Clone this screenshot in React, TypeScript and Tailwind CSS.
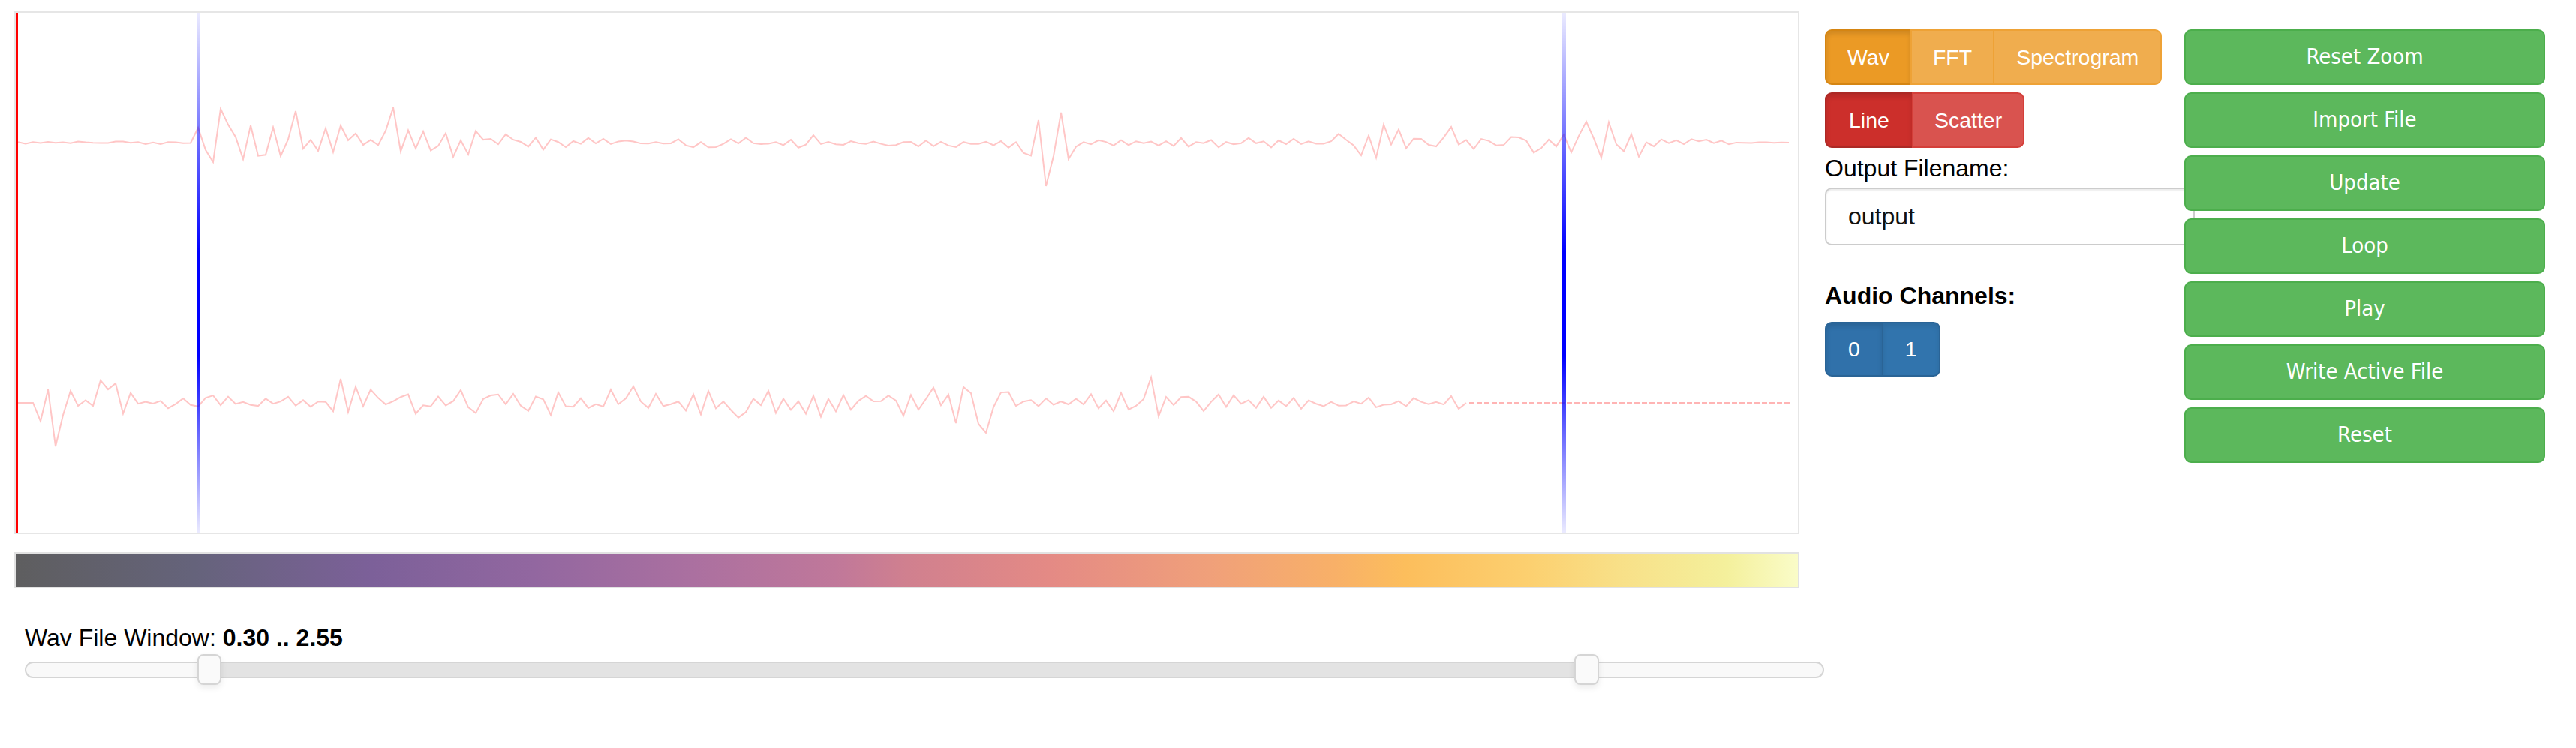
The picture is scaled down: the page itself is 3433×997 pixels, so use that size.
import React from "react";

function rng(seed: number) {
  let a = seed;
  return () => {
    a |= 0;
    a = (a + 0x6d2b79f5) | 0;
    let t = Math.imul(a ^ (a >>> 15), 1 | a);
    t = (t + Math.imul(t ^ (t >>> 7), 61 | t)) ^ t;
    return ((t ^ (t >>> 14)) >>> 0) / 4294967296;
  };
}

function makePoints(
  cy: number,
  env: (x: number) => number,
  seed: number,
  x0: number,
  x1: number,
  step: number,
  spikes: [number, number][]
) {
  const r = rng(seed);
  const vals: number[] = [];
  const xs: number[] = [];
  let sign = 1;
  for (let x = x0; x <= x1; x += step) {
    const a = env(x);
    if (r() < 0.72) sign = -sign;
    const q = r();
    let v = a * (0.1 + 0.9 * q * q) * sign;
    if (r() < 0.12) v *= 1.7;
    xs.push(x);
    vals.push(v);
  }
  for (const [sx, sv] of spikes) {
    const i = Math.round((sx - x0) / step);
    if (i >= 0 && i < vals.length) vals[i] = sv;
  }
  return xs.map((x, i) => `${x.toFixed(1)},${(cy + vals[i]).toFixed(1)}`).join(" ");
}

const env0 = (x: number) => {
  if (x < 243) return 2;
  if (x < 660) return 44 - (x - 243) * 0.06;
  if (x < 1340) return 7;
  if (x < 1420) return 30;
  if (x < 1760) return 7;
  if (x < 2170) return 22;
  if (x < 2290) return 5;
  return 0.6;
};

const env1 = (x: number) => {
  if (x < 30) return 0.5;
  if (x < 60) return 30;
  if (x < 160) return 22;
  if (x < 243) return 9;
  if (x < 290) return 30;
  if (x < 420) return 10;
  if (x < 480) return 28;
  if (x < 1220) return 18;
  if (x < 1300) return 30;
  if (x < 1480) return 16;
  if (x < 1560) return 28;
  if (x < 1930) return 11;
  return 0.4;
};

const spikes0: [number, number][] = [
  [263, 26],
  [273, -45],
  [303, 22],
  [373, -42],
  [1363, -30],
  [1373, 58],
  [1383, 18],
  [1393, -40],
  [1403, 22],
  [1813, 20],
  [1823, -24],
  [2093, -28],
  [2113, 20],
];

const spikes1: [number, number][] = [
  [53, 58],
  [73, -16],
  [113, -30],
  [123, -18],
  [433, -32],
  [443, 12],
  [823, -22],
  [1283, 28],
  [1293, 40],
  [1513, -34],
  [1523, 18],
];

function Wave() {
  const W = 2375;
  const H = 693;
  const top = makePoints(173, env0, 11, 3, 2366, 10, spikes0);
  const bottom = makePoints(520, env1, 29, 3, 1937, 10, spikes1);
  return (
    <svg width={W} height={H} viewBox={`0 0 ${W} ${H}`} className="block">
      <defs>
        <linearGradient id="blueFade" x1="0" y1="0" x2="0" y2="1">
          <stop offset="0%" stopColor="#0000ff" stopOpacity="0.08" />
          <stop offset="46%" stopColor="#0000ff" stopOpacity="1" />
          <stop offset="66%" stopColor="#0000ff" stopOpacity="1" />
          <stop offset="100%" stopColor="#0000ff" stopOpacity="0.08" />
        </linearGradient>
      </defs>
      <polyline
        points={top}
        fill="none"
        stroke="#ffc6c6"
        strokeWidth="2"
        strokeLinejoin="miter"
      />
      <polyline
        points={bottom}
        fill="none"
        stroke="#ffc6c6"
        strokeWidth="2"
        strokeLinejoin="miter"
      />
      <line
        x1="1937"
        y1="520"
        x2="2366"
        y2="520"
        stroke="#ffb4b4"
        strokeWidth="2"
        strokeDasharray="7 3"
      />
      <rect x="0" y="0" width="3" height={H} fill="#ff0000" />
      <rect x="241" y="0" width="5" height={H} fill="url(#blueFade)" />
      <rect x="2061" y="0" width="5" height={H} fill="url(#blueFade)" />
    </svg>
  );
}

const greenFont =
  "font-['DejaVu_Sans_Condensed','DejaVu_Sans',sans-serif] font-stretch-condensed";

function GreenButton({ label }: { label: string }) {
  return (
    <button
      className={`h-[74px] w-[481px] rounded-[9px] border-2 border-[#4cae4c] bg-[#5cb85c] text-[29px] text-white flex items-center justify-center ${greenFont}`}
    >
      {label}
    </button>
  );
}

export default function App() {
  return (
    <div className="flex w-[3433px] min-h-[997px] bg-white text-black font-['Liberation_Sans',Arial,sans-serif]">
      {/* left column: chart, colour bar, slider */}
      <div className="w-[2432px] shrink-0 flex flex-col pt-[15px]">
        <div className="ml-[19px] w-[2379px] h-[697px] border-2 border-[#e6e6e6]">
          <Wave />
        </div>
        <div className="ml-[19px] mt-[24px] w-[2379px] h-[48px] border-2 border-[#e2e2e2] bg-[linear-gradient(to_right,#5e5e5f_0%,#65637b_10%,#7c6099_20%,#9267a0_29%,#ab70a0_38%,#c0789a_46%,#d0808f_50%,#e48a85_58%,#f0a07a_67%,#f8b068_74%,#fcbe5c_78%,#fcd070_85%,#f8e088_90%,#f4f09c_96%,#fafcc8_100%)]" />
        <div className="pl-[33px] mt-[45px]">
          <div className="text-[32px] leading-[43px]">
            Wav File Window: <span className="font-bold">0.30 .. 2.55</span>
          </div>
          <div className="relative mt-[10px] w-[2398px] h-[22px] rounded-full border-2 border-[#d5d5d5] bg-[#f9f9f9]">
            <div className="absolute top-0 bottom-0 left-[244px] w-[1835px] bg-[#e3e3e3]" />
            <div className="absolute top-[-12px] left-[228px] w-[32px] h-[41px] rounded-[8px] border-2 border-[#d5d5d5] bg-[#fafafa] shadow-[0_4px_8px_rgba(0,0,0,0.08)]" />
            <div className="absolute top-[-12px] left-[2063px] w-[33px] h-[41px] rounded-[8px] border-2 border-[#d5d5d5] bg-[#fafafa] shadow-[0_4px_8px_rgba(0,0,0,0.08)]" />
          </div>
        </div>
      </div>

      {/* right side */}
      <div className="flex pt-[39px]">
        <div className="w-[493px] shrink-0 flex flex-col items-start">
          <div className="flex h-[74px] text-[28.5px] text-white">
            <div className="flex items-center px-[28px] rounded-l-[9px] border-2 border-[#d58512] bg-[#eb9a25] shadow-[inset_0_4px_6px_rgba(0,0,0,0.12)]">
              Wav
            </div>
            <div className="flex items-center px-[28px] -ml-[2px] border-2 border-[#eea236] bg-[#f0ad4e]">
              FFT
            </div>
            <div className="flex items-center px-[29px] -ml-[2px] rounded-r-[9px] border-2 border-[#eea236] bg-[#f0ad4e]">
              Spectrogram
            </div>
          </div>
          <div className="flex h-[74px] mt-[10px] text-[28.5px] text-white">
            <div className="flex items-center px-[30px] rounded-l-[9px] border-2 border-[#ac2925] bg-[#cc2f2b] shadow-[inset_0_4px_6px_rgba(0,0,0,0.12)]">
              Line
            </div>
            <div className="flex items-center px-[28px] -ml-[2px] rounded-r-[9px] border-2 border-[#d43f3a] bg-[#d9534f]">
              Scatter
            </div>
          </div>
          <div className="mt-[6px] text-[32px] leading-[43px]">Output Filename:</div>
          <input
            readOnly
            value="output"
            className="mt-[4px] w-[493px] h-[77px] rounded-[9px] border-2 border-[#cccccc] bg-white px-[29px] text-[32px] text-[#111] shadow-[inset_0_2px_2px_rgba(0,0,0,0.075)] outline-none"
          />
          <div className="mt-[46px] text-[32px] leading-[43px] font-bold">Audio Channels:</div>
          <div className="flex h-[73px] mt-[13px] text-[28.5px] text-white">
            <div className="flex items-center px-[29px] rounded-l-[9px] border-2 border-[#2a6496] bg-[#3071aa] shadow-[inset_0_4px_6px_rgba(0,0,0,0.12)]">
              0
            </div>
            <div className="flex items-center px-[29px] -ml-[2px] rounded-r-[9px] border-2 border-[#2a6496] bg-[#3174ad] shadow-[inset_0_4px_6px_rgba(0,0,0,0.08)]">
              1
            </div>
          </div>
        </div>
        <div className="relative z-10 -ml-[14px] w-[481px] flex flex-col gap-[10px]">
          <GreenButton label="Reset Zoom" />
          <GreenButton label="Import File" />
          <GreenButton label="Update" />
          <GreenButton label="Loop" />
          <GreenButton label="Play" />
          <GreenButton label="Write Active File" />
          <GreenButton label="Reset" />
        </div>
      </div>
    </div>
  );
}
